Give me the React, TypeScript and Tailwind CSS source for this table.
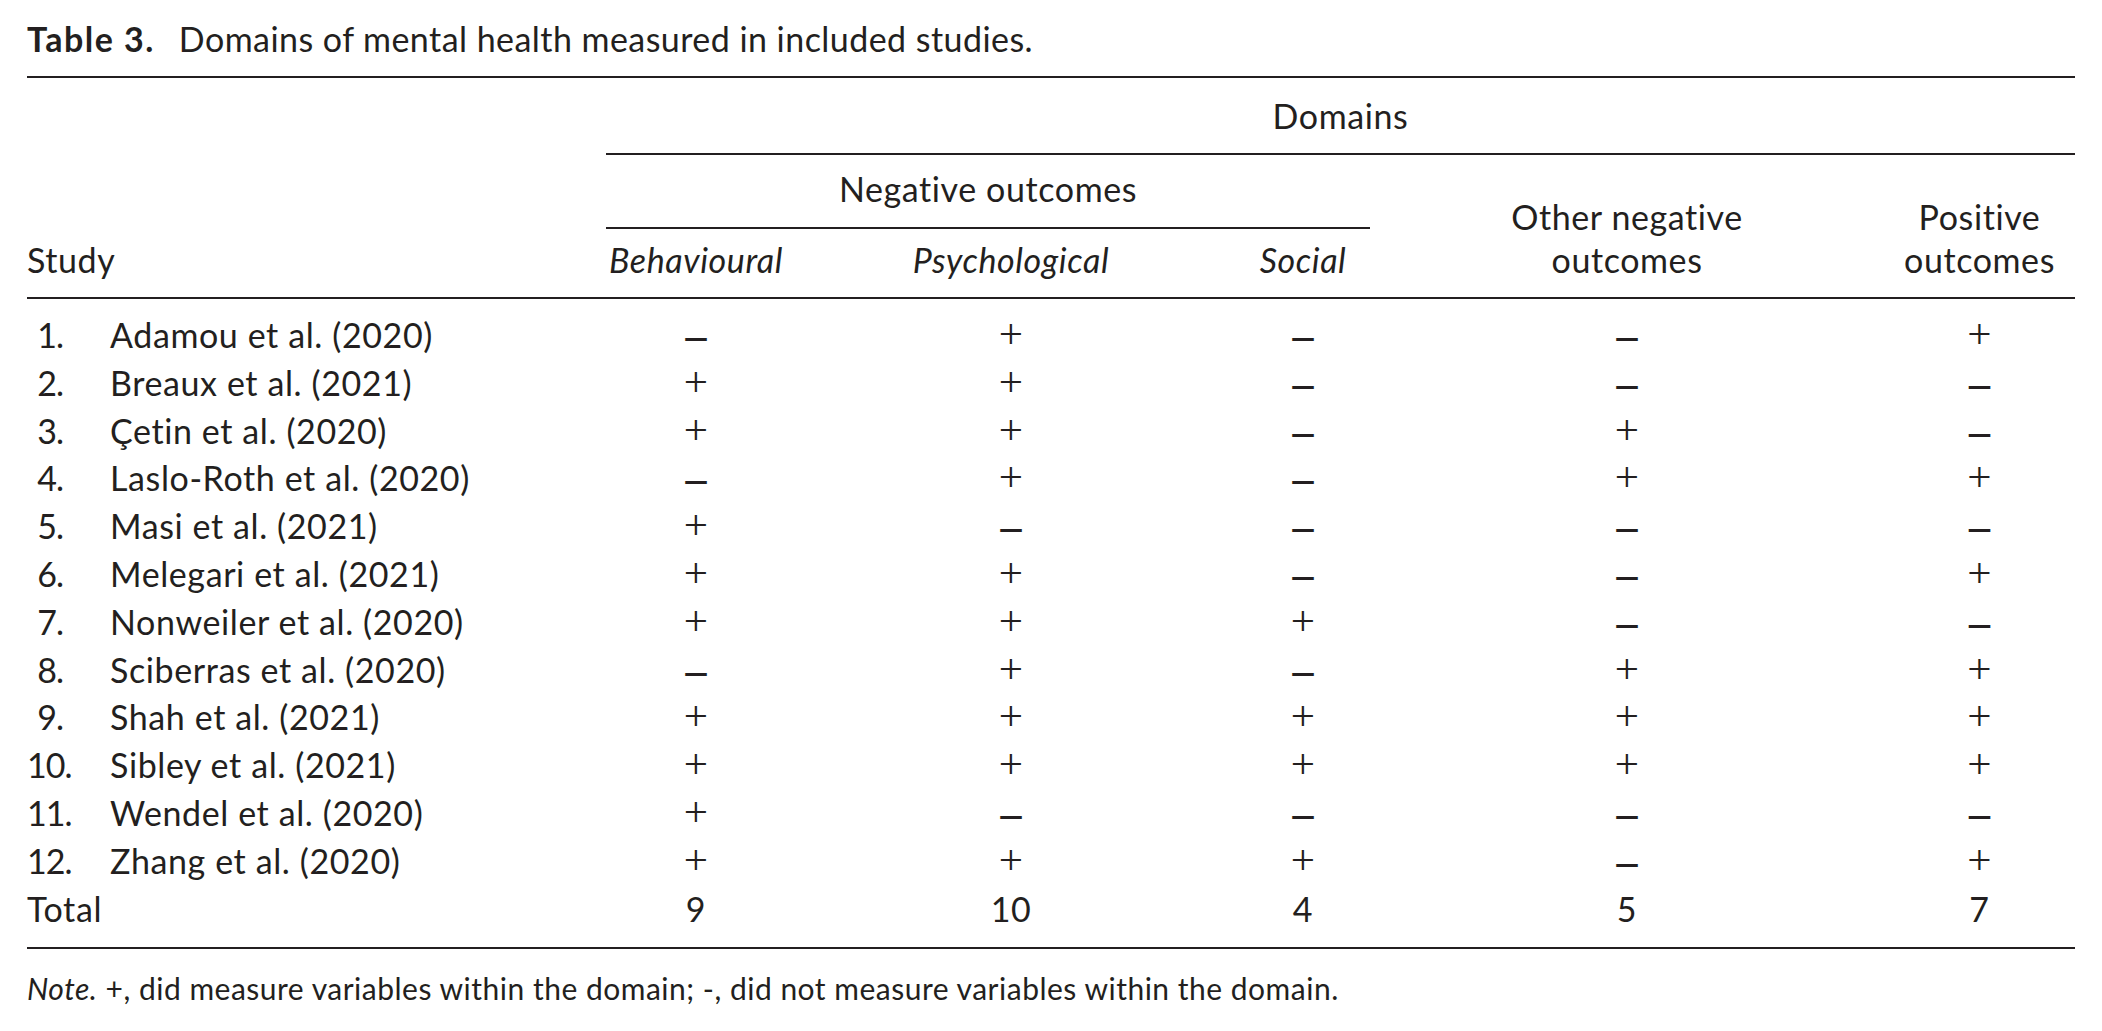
const rows: [string, string, string][] = [
  ["1.", "Adamou et al. (2020)", "-+--+"],
  ["2.", "Breaux et al. (2021)", "++---"],
  ["3.", "Çetin et al. (2020)", "++-+-"],
  ["4.", "Laslo-Roth et al. (2020)", "-+-++"],
  ["5.", "Masi et al. (2021)", "+----"],
  ["6.", "Melegari et al. (2021)", "++--+"],
  ["7.", "Nonweiler et al. (2020)", "+++--"],
  ["8.", "Sciberras et al. (2020)", "-+-++"],
  ["9.", "Shah et al. (2021)", "+++++"],
  ["10.", "Sibley et al. (2021)", "+++++"],
  ["11.", "Wendel et al. (2020)", "+----"],
  ["12.", "Zhang et al. (2020)", "+++-+"],
]

const totals = ["9", "10", "4", "5", "7"]

// widths of the five domain columns, in order
const colWidths = ["w-[180px]", "w-[450px]", "w-[134px]", "w-[514px]", "w-[191px]"]

function Mark({ v }: { v: string }) {
  if (v === "+")
    return <span className="font-['Liberation_Serif',serif] text-[43px] leading-[0] tracking-normal">+</span>
  if (v === "-")
    return (
      <span className="font-['Liberation_Serif',serif] font-bold text-[42px] leading-[0] tracking-normal align-[-1px]">
        –
      </span>
    )
  return <>{v}</>
}

function Cells({ values }: { values: string[] }) {
  return (
    <>
      {values.map((v, i) => (
        <div key={i} className={`${colWidths[i]} text-center`}>
          <Mark v={v} />
        </div>
      ))}
    </>
  )
}

export default function App() {
  return (
    <div className="min-h-screen bg-white text-[#231f20] font-['Lato','Open_Sans',sans-serif] text-[34px] tracking-[0.6px]">
      <div className="ml-[27px] w-[2048px]">
        {/* Caption */}
        <p className="pt-[19px] leading-[40px]">
          <span className="font-bold tracking-[1.5px]">Table 3.</span>
          <span className="ml-[24px] tracking-[0.45px]">Domains of mental health measured in included studies.</span>
        </p>

        {/* Header */}
        <div className="mt-[17px] flex border-y-2 border-[#231f20]">
          <div className="w-[579px] flex items-end pb-[13px] leading-[48px]">Study</div>
          <div className="flex-1 flex flex-col">
            <div className="h-[75px] box-content border-b-2 border-[#231f20] flex items-center justify-center leading-[48px]">
              Domains
            </div>
            <div className="flex">
              <div className="w-[764px] flex flex-col">
                <div className="h-[62px] box-content border-b-2 border-[#231f20] pt-[10px] text-center leading-[48px]">
                  Negative outcomes
                </div>
                <div className="flex h-[68px] items-end pb-[13px] italic leading-[48px]">
                  <div className="w-[180px] text-center">Behavioural</div>
                  <div className="w-[450px] text-center">Psychological</div>
                  <div className="w-[134px] text-center">Social</div>
                </div>
              </div>
              <div className="w-[514px] flex items-end justify-center pb-[16px] text-center leading-[43px]">
                Other negative
                <br />
                outcomes
              </div>
              <div className="w-[191px] flex items-end justify-center pb-[16px] text-center leading-[43px]">
                Positive
                <br />
                outcomes
              </div>
            </div>
          </div>
        </div>

        {/* Body */}
        <div className="pt-[12px] pb-[15px] border-b-2 border-[#231f20]">
          {rows.map(([num, name, marks]) => (
            <div key={num} className="flex h-[47.8px] leading-[47.8px]">
              <div className="w-[579px] flex">
                <span className="w-[36px] text-right tracking-[-1px]">{num}</span>
                <span className="ml-[47px]">{name}</span>
              </div>
              <Cells values={marks.split("")} />
            </div>
          ))}
          <div className="flex h-[47.8px] leading-[47.8px]">
            <div className="w-[579px]">Total</div>
            <Cells values={totals} />
          </div>
        </div>

        {/* Note */}
        <p className="mt-[21px] text-[30px] leading-[36px] tracking-[0.5px]">
          <span className="italic">Note.</span> +, did measure variables within the domain; -, did not measure variables
          within the domain.
        </p>
      </div>
    </div>
  )
}
